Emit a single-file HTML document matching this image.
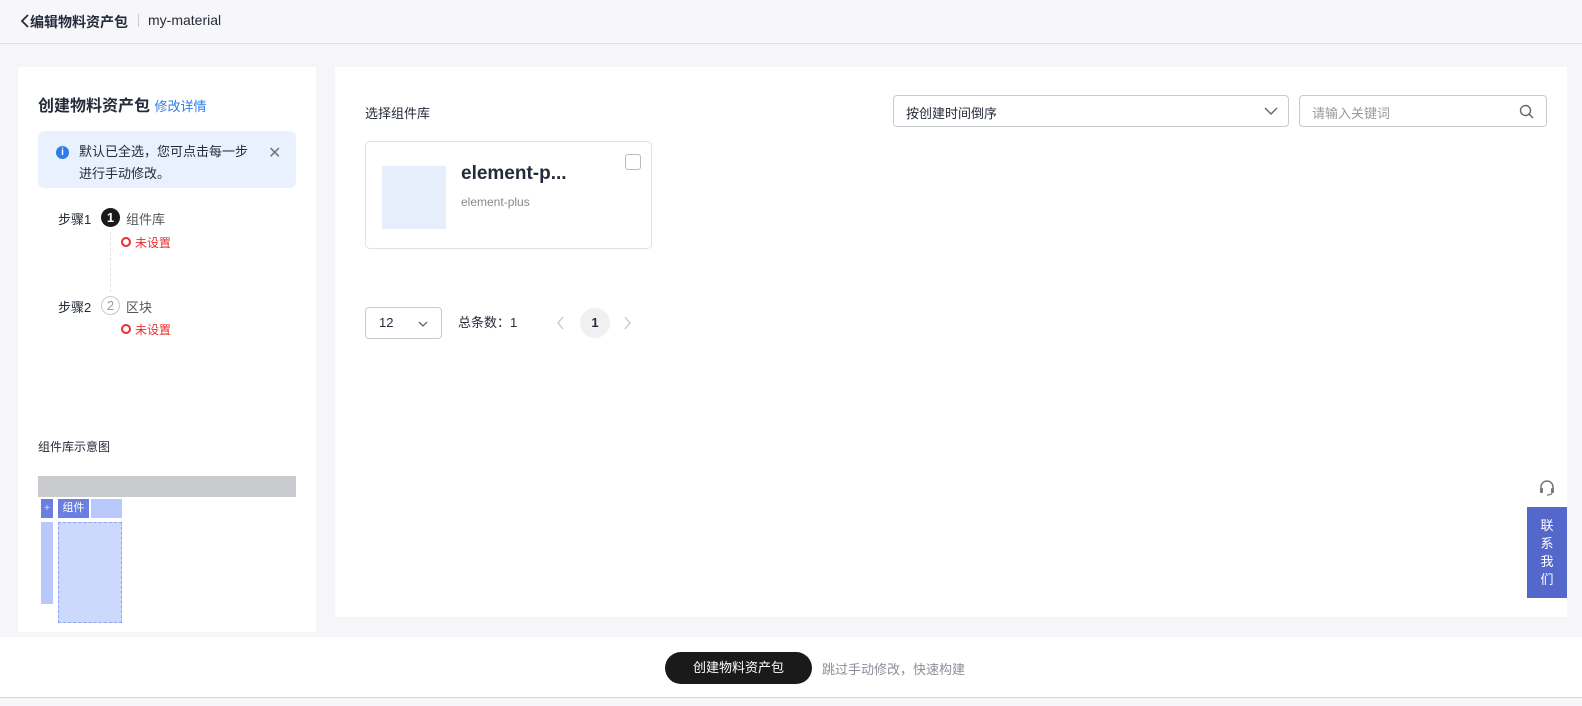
<!DOCTYPE html>
<html><head><meta charset="utf-8"><style>
*{box-sizing:border-box;margin:0;padding:0}
body{width:1582px;height:706px;background:#f6f6f9;font-family:"Liberation Sans","Noto Sans CJK SC",sans-serif;position:relative;overflow:hidden;color:#252b3a;font-size:13px}
.abs{position:absolute}
</style></head><body>
<div class="abs" style="left:0;top:0;width:1582px;height:44px;border-bottom:1px solid #dfe1e6;background:#f7f7fa"></div>
<div class="abs" style="left:20px;top:12px;font-size:14px;font-weight:bold;color:#252b3a">
<svg width="10" height="14" style="vertical-align:-1px" viewBox="0 0 10 14"><path d="M8 1 L2 7 L8 13" stroke="#252b3a" stroke-width="1.8" fill="none"/></svg>编辑物料资产包</div>
<div class="abs" style="left:138px;top:14px;width:1px;height:13px;background:#ccc"></div>
<div class="abs" style="left:148px;top:12px;font-size:14px">my-material</div>

<div class="abs" style="left:18px;top:67px;width:298px;height:565px;background:#fff"></div>
<div class="abs" style="left:38px;top:92px;font-size:16px;font-weight:bold">创建物料资产包 <span style="font-size:13px;font-weight:normal;color:#2e7de6">修改详情</span></div>
<div class="abs" style="left:38px;top:131px;width:258px;height:57px;background:#e8f1fd;border-radius:6px"></div>
<div class="abs" style="left:56px;top:146px;width:13px;height:13px;border-radius:50%;background:#2e7de6;color:#fff;font-size:10px;text-align:center;line-height:13px;font-weight:bold">i</div>
<div class="abs" style="left:79px;top:141px;font-size:13px;line-height:22px;color:#252b3a">默认已全选，您可点击每一步<br>进行手动修改。</div>
<div class="abs" style="left:268px;top:143px;font-size:16px;color:#777">✕</div>
<div class="abs" style="left:58px;top:209px">步骤1</div>
<div class="abs" style="left:101px;top:208px;width:19px;height:19px;border-radius:50%;background:#1a1a1a;color:#fff;font-weight:bold;text-align:center;line-height:19px">1</div>
<div class="abs" style="left:126px;top:209px;color:#555">组件库</div>
<div class="abs" style="left:110px;top:232px;width:1px;height:60px;border-left:1px dashed #e2e2e2"></div>
<div class="abs" style="left:121px;top:237px;width:10px;height:10px;border:2.5px solid #e8302f;border-radius:50%"></div>
<div class="abs" style="left:135px;top:234px;font-size:12px;color:#e8302f">未设置</div>
<div class="abs" style="left:58px;top:297px">步骤2</div>
<div class="abs" style="left:101px;top:296px;width:19px;height:19px;border-radius:50%;border:1px solid #c9c9c9;color:#999;text-align:center;line-height:17px">2</div>
<div class="abs" style="left:126px;top:297px;color:#555">区块</div>
<div class="abs" style="left:121px;top:324px;width:10px;height:10px;border:2.5px solid #e8302f;border-radius:50%"></div>
<div class="abs" style="left:135px;top:321px;font-size:12px;color:#e8302f">未设置</div>
<div class="abs" style="left:38px;top:438px;font-size:12px">组件库示意图</div>
<div class="abs" style="left:38px;top:476px;width:258px;height:21px;background:#c9cbcf"></div>
<div class="abs" style="left:38px;top:497px;width:205px;height:132px;background:#fff"></div>
<div class="abs" style="left:41px;top:499px;width:12px;height:19px;background:#6a7fe0;color:#dfe4ff;font-size:10px;text-align:center;line-height:19px">+</div>
<div class="abs" style="left:58px;top:499px;width:31px;height:19px;background:#6a7fe0;color:#fff;font-size:11px;text-align:center;line-height:19px">组件</div>
<div class="abs" style="left:91px;top:499px;width:31px;height:19px;background:#b8c8fb"></div>
<div class="abs" style="left:41px;top:522px;width:12px;height:82px;background:#b8c8fb"></div>
<div class="abs" style="left:58px;top:522px;width:64px;height:101px;background:#ccd9fd;border:1px dashed #8ea3ef"></div>

<div class="abs" style="left:335px;top:67px;width:1232px;height:550px;background:#fff"></div>
<div class="abs" style="left:365px;top:103px;font-size:13px">选择组件库</div>
<div class="abs" style="left:893px;top:95px;width:396px;height:32px;border:1px solid #c9cbd1;border-radius:4px;padding:7px 12px;font-size:13px">按创建时间倒序
<svg class="abs" style="right:10px;top:10px" width="14" height="10" viewBox="0 0 14 10"><path d="M1 2 L7 8 L13 2" stroke="#666" stroke-width="1.4" fill="none"/></svg></div>
<div class="abs" style="left:1299px;top:95px;width:248px;height:32px;border:1px solid #c9cbd1;border-radius:4px;padding:7px 12px;font-size:13px;color:#999">请输入关键词
<svg class="abs" style="right:12px;top:8px" width="15" height="15" viewBox="0 0 15 15"><circle cx="6.5" cy="6.5" r="5" stroke="#666" stroke-width="1.4" fill="none"/><path d="M10 10 L14 14" stroke="#666" stroke-width="1.4"/></svg></div>
<div class="abs" style="left:365px;top:141px;width:287px;height:108px;border:1px solid #dfe1e6;border-radius:5px"></div>
<div class="abs" style="left:382px;top:166px;width:64px;height:63px;background:#e6eefc"></div>
<div class="abs" style="left:461px;top:163px;font-size:19px;font-weight:bold">element-p...</div>
<div class="abs" style="left:461px;top:195px;font-size:12px;color:#888">element-plus</div>
<div class="abs" style="left:625px;top:154px;width:16px;height:16px;border:1px solid #bbb;border-radius:3px"></div>
<div class="abs" style="left:365px;top:307px;width:77px;height:32px;border:1px solid #c9cbd1;border-radius:4px;padding:7px 13px">12
<svg class="abs" style="right:12px;top:12px" width="12" height="8" viewBox="0 0 12 8"><path d="M2 2 L6 6 L10 2" stroke="#666" stroke-width="1.3" fill="none"/></svg></div>
<div class="abs" style="left:458px;top:315px;line-height:16px">总条数：1</div>
<svg class="abs" style="left:557px;top:316px" width="8" height="14" viewBox="0 0 8 14"><path d="M6 1 L1 7 L6 13" stroke="#c4c4c4" stroke-width="1.3" fill="none"/></svg>
<div class="abs" style="left:580px;top:308px;width:30px;height:30px;border-radius:50%;background:#f0f0f0;text-align:center;line-height:30px;font-weight:bold">1</div>
<svg class="abs" style="left:623px;top:316px" width="8" height="14" viewBox="0 0 8 14"><path d="M2 1 L7 7 L2 13" stroke="#c4c4c4" stroke-width="1.3" fill="none"/></svg>

<div class="abs" style="left:1527px;top:470px;width:40px;height:37px;background:#fff"></div>
<svg class="abs" style="left:1538px;top:479px" width="18" height="18" viewBox="0 0 18 18"><path d="M3 10 V8 a6 6 0 0 1 12 0 V10" stroke="#777" stroke-width="1.5" fill="none"/><rect x="2" y="9" width="3" height="5" rx="1" fill="#777"/><rect x="13" y="9" width="3" height="5" rx="1" fill="#777"/><path d="M14 14 Q13 16 9 16" stroke="#777" stroke-width="1.3" fill="none"/></svg>
<div class="abs" style="left:1527px;top:507px;width:40px;height:91px;background:#5468cc;color:#fff;font-size:13px;text-align:center;line-height:18px;padding-top:10px">联<br>系<br>我<br>们</div>

<div class="abs" style="left:0;top:637px;width:1582px;height:61px;background:#fff;border-bottom:1px solid #d5d5da"></div>
<div class="abs" style="left:665px;top:652px;width:147px;height:32px;border-radius:16px;background:#1a1a1a;color:#fff;text-align:center;line-height:32px;font-size:13px">创建物料资产包</div>
<div class="abs" style="left:822px;top:659px;color:#8a8e99;font-size:13px">跳过手动修改，快速构建</div>
</body></html>
